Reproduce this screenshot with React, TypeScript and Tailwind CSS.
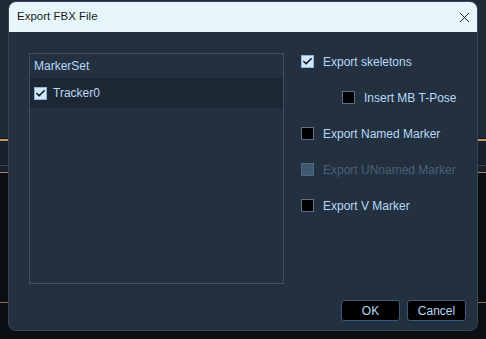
import { X, Check } from "lucide-react";

function Box({ checked, disabled }: { checked?: boolean; disabled?: boolean }) {
  if (disabled) {
    return <span className="w-[13px] h-[13px] shrink-0 bg-[#3f5870] border border-[#52687e]" />;
  }
  if (checked) {
    return (
      <span className="w-[13px] h-[13px] shrink-0 bg-[#cfe6fb] border border-[#8fb4d8] flex items-center justify-center">
        <Check size={11} strokeWidth={3.5} className="text-[#111820]" />
      </span>
    );
  }
  return <span className="w-[13px] h-[13px] shrink-0 bg-black border border-[#5e7184]" />;
}

function Option({ label, checked, disabled, indent }: { label: string; checked?: boolean; disabled?: boolean; indent?: boolean }) {
  return (
    <div className={`flex items-center gap-[9px] h-[13px] ${indent ? "pl-[41px] gap-[8px]" : ""}`}>
      <Box checked={checked} disabled={disabled} />
      <span className={`text-[12px] leading-none ${disabled ? "text-[#4b6178]" : "text-[#b9d9f7]"}`}>{label}</span>
    </div>
  );
}

export default function App() {
  return (
    <div className="relative w-[486px] h-[339px] overflow-hidden bg-[#0b0f14] font-['Segoe_UI','Liberation_Sans',sans-serif]">
      {/* app behind the dialog */}
      <div className="flex flex-col">
        <div className="h-[138px] bg-[#202b38]" />
        <div className="h-px bg-[#10161d]" />
        <div className="h-[2px] bg-[#c8946a]" />
        <div className="h-[25px] bg-[#17202b] border-b border-[#3a4756]" />
        <div className="h-[6px] bg-[#17202b]" />
        <div className="h-px bg-[#a88668]" />
        <div className="h-[129px] bg-[#0b0f14]" />
        <div className="h-px bg-[#8a7058]" />
      </div>

      {/* dialog */}
      <div className="absolute left-[8px] top-[1px] w-[470px] h-[330px] rounded-[8px] overflow-hidden bg-[#223040] border border-[#36475a] flex flex-col">
        <div className="h-[30px] bg-[#e6f6fa] flex items-center justify-between pl-[8px] pr-[4px] shrink-0">
          <span className="text-[11.5px] text-[#1a1a1a]">Export FBX File</span>
          <X size={17} strokeWidth={1.3} className="text-[#1a1a1a]" />
        </div>

        <div className="flex pt-[21px] pl-[20px]">
          <div className="w-[255px] h-[231px] border border-[#3e5064] flex flex-col">
            <div className="h-[24px] flex items-center pl-[4px] text-[12px] text-[#b9d9f7]">MarkerSet</div>
            <div className="h-[30px] bg-[#1c2734] flex items-center gap-[6px] pl-[4px]">
              <Box checked />
              <span className="text-[12px] text-[#b9d9f7]">Tracker0</span>
            </div>
          </div>

          <div className="flex flex-col gap-[23px] pl-[17px] pt-[2px]">
            <Option label="Export skeletons" checked />
            <Option label="Insert MB T-Pose" indent />
            <Option label="Export Named Marker" />
            <Option label="Export UNnamed Marker" disabled />
            <Option label="Export V Marker" />
          </div>
        </div>

        <div className="flex justify-end gap-[7px] pr-[11px] mt-[16px]">
          <button className="w-[59px] h-[21px] bg-black border border-[#3e5a78] rounded-[3px] text-[12px] text-[#b9d9f7]">OK</button>
          <button className="w-[59px] h-[21px] bg-black border border-[#3e5a78] rounded-[3px] text-[12px] text-[#b9d9f7]">Cancel</button>
        </div>
      </div>
    </div>
  );
}
